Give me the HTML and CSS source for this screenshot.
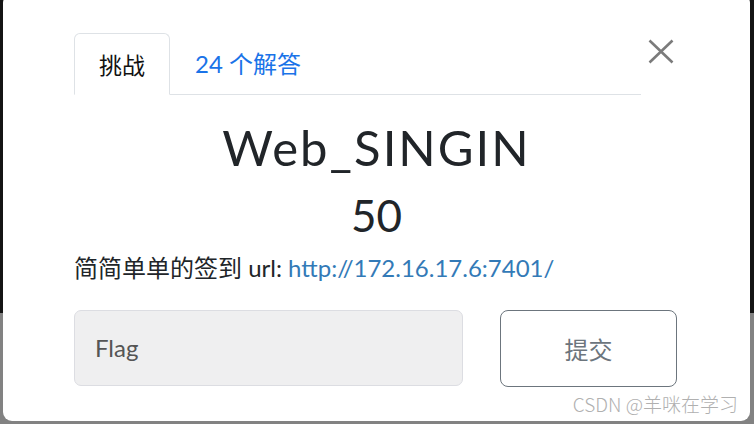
FILE: index.html
```html
<!DOCTYPE html>
<html lang="zh">
<head>
<meta charset="utf-8">
<title>Web_SINGIN</title>
<link rel="stylesheet" href="styles.css">
</head>
<body>
<div class="backdrop">
  <div class="modal">
    <div class="modal-body">
      <div class="header-row">
        <ul class="nav-tabs">
          <li class="tab active">挑战</li>
          <li class="tab link">24 个解答</li>
        </ul>
        <button class="close" aria-label="Close">
          <svg width="26" height="25" viewBox="0 0 26 25"><path d="M1.5 1.5 L24.5 23.5 M24.5 1.5 L1.5 23.5" stroke="#7b7b7b" stroke-width="2.6" fill="none"/></svg>
        </button>
      </div>
      <h2 class="challenge-name">Web_SINGIN</h2>
      <h3 class="challenge-value">50</h3>
      <p class="desc">简简单单的签到 url: <a class="url" href="#">http://172.16.17.6:7401/</a></p>
      <div class="submit-row">
        <div class="flag-input">Flag</div>
        <button class="submit">提交</button>
      </div>
    </div>
    <div class="watermark">CSDN @羊咪在学习</div>
  </div>
</div>
</body>
</html>
```
FILE: styles.css
```css
* { box-sizing: border-box; }
html, body { margin: 0; padding: 0; }
body {
  width: 754px;
  height: 424px;
  overflow: hidden;
  background: linear-gradient(to bottom, #141414 0, #141414 313px, #828282 313px, #828282 100%);
  font-family: Lato, "Noto Sans CJK SC", sans-serif;
  color: #212529;
}
.backdrop {
  padding: 0 4px 0 3px;
}
.modal {
  position: relative;
  margin-top: -6px;
  height: 427px;
  background: #fff;
  border-radius: 9px;
}
.modal-body {
  padding: 39px 0 0 71px;
}
.header-row {
  display: flex;
  align-items: flex-start;
}
.nav-tabs {
  list-style: none;
  margin: 0;
  padding: 0;
  width: 567px;
  display: flex;
  border-bottom: 1px solid #dee2e6;
}
.tab {
  padding: 12px 24px;
  line-height: 36px;
  border: 1px solid transparent;
  border-top-left-radius: 6px;
  border-top-right-radius: 6px;
  margin-bottom: -1px;
  font-family: "Noto Sans CJK SC", Lato, sans-serif;
  font-size: 23px;
}
.tab.active {
  color: #111;
  border-color: #dee2e6 #dee2e6 #fff;
  background: #fff;
}
.tab.link {
  color: #1a73e8;
  font-family: Lato, "Noto Sans CJK SC", sans-serif;
  font-size: 24px;
}
.close {
  margin: 6px 0 0 7px;
  padding: 0;
  border: 0;
  background: transparent;
  width: 26px;
  height: 25px;
  display: block;
}
.close svg { display: block; }
.challenge-name {
  margin: 23px 0 0 -71px;
  text-align: center;
  font-size: 49px;
  line-height: 58px;
  font-weight: 400;
  letter-spacing: 2px;
  color: #212529;
}
.challenge-value {
  margin: 13px 0 0 -71px;
  text-align: center;
  font-size: 44px;
  line-height: 52px;
  font-weight: 400;
  color: #212529;
}
.desc {
  margin: 9px 0 0 0;
  font-size: 24px;
  line-height: 36px;
  color: #212529;
  font-family: Lato, "Noto Sans CJK SC", sans-serif;
}
.url {
  color: #337ab7;
  text-decoration: none;
}
.submit-row {
  display: flex;
  gap: 37px;
  margin-top: 24px;
}
.flag-input {
  width: 389px;
  height: 76px;
  padding: 19px 20px;
  font-size: 24px;
  line-height: 36px;
  color: #555;
  background: #efeff0;
  border: 1px solid #dcdde2;
  border-radius: 7px;
}
.submit {
  width: 177px;
  height: 77px;
  font-family: "Noto Sans CJK SC", sans-serif;
  font-size: 24px;
  color: #6c757d;
  background: #fff;
  border: 1px solid #6c757d;
  border-radius: 8px;
}
.watermark {
  position: absolute;
  right: 12px;
  bottom: 5px;
  font-family: "Noto Sans CJK SC", sans-serif;
  font-size: 19px;
  line-height: 24px;
  font-weight: 300;
  color: #b0b0b0;
}
```
